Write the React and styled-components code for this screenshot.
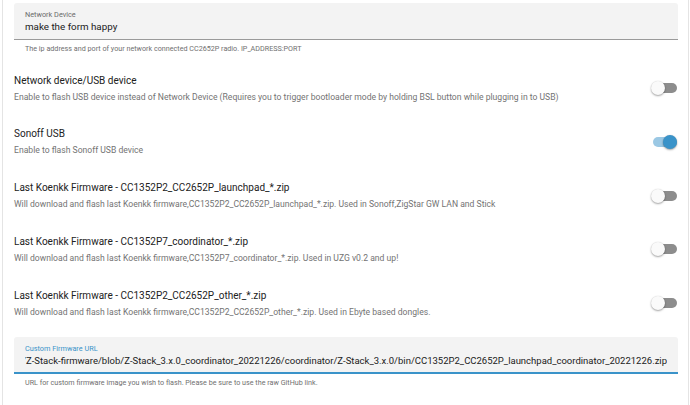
import React, { useState } from 'react';
import styled, { createGlobalStyle } from 'styled-components';

const GlobalStyle = createGlobalStyle`
  html, body {
    margin: 0;
    padding: 0;
    background: #ffffff;
    font-family: Roboto, "Noto Sans", "Liberation Sans", sans-serif;
  }
`;

const Page = styled.div`
  width: 690px;
  height: 405px;
  overflow: hidden;
  padding: 0 1px 0 2px;
  box-sizing: border-box;
`;

const Card = styled.div`
  height: 100%;
  border-left: 1px solid #e4e4e4;
  border-right: 1px solid #e4e4e4;
  padding: 3px 10px 0 11px;
  box-sizing: border-box;
`;

const Field = styled.div`
  display: flex;
  flex-direction: column;
`;

const FieldBox = styled.div`
  background: #f3f3f3;
  border-radius: 3px 3px 0 0;
  height: 37px;
  padding: 7px 11px 0;
  box-sizing: border-box;
  border-bottom: ${p => (p.$focused ? '2px solid #3a93c9' : '1px solid #9a9a9a')};
  display: flex;
  flex-direction: column;
  overflow: hidden;
`;

const FieldLabel = styled.div`
  font-size: 7.3px;
  line-height: 10px;
  color: ${p => (p.$focused ? '#3a93c9' : '#6b6b6b')};
`;

const FieldValue = styled.div`
  font-size: ${p => (p.$end ? '9.5px' : '9.8px')};
  line-height: 13px;
  color: #212121;
  white-space: nowrap;
  display: flex;
  justify-content: ${p => (p.$end ? 'flex-end' : 'flex-start')};
  overflow: hidden;
`;

const Helper = styled.div`
  font-size: 7.2px;
  line-height: 10px;
  color: #6f6f6f;
  padding: 4px 11px 0;
`;

const Rows = styled.div`
  display: flex;
  flex-direction: column;
  padding-top: 18px;
  gap: 21.75px;
  margin-bottom: 18px;
`;

const Row = styled.div`
  display: flex;
  align-items: center;
  justify-content: space-between;
  height: 32px;
`;

const RowText = styled.div`
  display: flex;
  flex-direction: column;
  gap: 3px;
`;

const Title = styled.div`
  font-size: 10px;
  line-height: 14px;
  color: #212121;
`;

const Desc = styled.div`
  font-size: 8.6px;
  line-height: 12px;
  color: #737373;
`;

const SwitchWrap = styled.button`
  position: relative;
  width: 27px;
  height: 14px;
  padding: 0;
  border: none;
  background: transparent;
  cursor: pointer;
  flex-shrink: 0;
`;

const Track = styled.span`
  position: absolute;
  left: 2px;
  right: 1px;
  top: 2px;
  height: 10px;
  border-radius: 5px;
  background: ${p => (p.$on ? '#9bc8e4' : '#8d8d8d')};
`;

const Thumb = styled.span`
  position: absolute;
  top: 0;
  left: ${p => (p.$on ? '12px' : '0')};
  width: 14px;
  height: 14px;
  border-radius: 50%;
  background: ${p => (p.$on ? '#3a93c9' : '#fafafa')};
  box-shadow: 0 1px 2px rgba(0, 0, 0, 0.35), 0 0 1px rgba(0, 0, 0, 0.15);
`;

const Switch = ({ on, onToggle }) => (
  <SwitchWrap onClick={onToggle}>
    <Track $on={on} />
    <Thumb $on={on} />
  </SwitchWrap>
);

const options = [
  {
    title: 'Network device/USB device',
    desc: 'Enable to flash USB device instead of Network Device (Requires you to trigger bootloader mode by holding BSL button while plugging in to USB)',
    on: false,
  },
  { title: 'Sonoff USB', desc: 'Enable to flash Sonoff USB device', on: true },
  {
    title: 'Last Koenkk Firmware - CC1352P2_CC2652P_launchpad_*.zip',
    desc: 'Will download and flash last Koenkk firmware,CC1352P2_CC2652P_launchpad_*.zip. Used in Sonoff,ZigStar GW LAN and Stick',
    on: false,
  },
  {
    title: 'Last Koenkk Firmware - CC1352P7_coordinator_*.zip',
    desc: 'Will download and flash last Koenkk firmware,CC1352P7_coordinator_*.zip. Used in UZG v0.2 and up!',
    on: false,
  },
  {
    title: 'Last Koenkk Firmware - CC1352P2_CC2652P_other_*.zip',
    desc: 'Will download and flash last Koenkk firmware,CC1352P2_CC2652P_other_*.zip. Used in Ebyte based dongles.',
    on: false,
  },
];

const App = () => {
  const [state, setState] = useState(options.map(o => o.on));

  const toggle = i => {
    setState(s => s.map((v, j) => (j === i ? !v : v)));
  };

  return (
    <Page>
      <GlobalStyle />
      <Card>
        <Field>
          <FieldBox>
            <FieldLabel>Network Device</FieldLabel>
            <FieldValue>make the form happy</FieldValue>
          </FieldBox>
          <Helper>The ip address and port of your network connected CC2652P radio. IP_ADDRESS:PORT</Helper>
        </Field>

        <Rows>
          {options.map((o, i) => (
            <Row key={o.title}>
              <RowText>
                <Title>{o.title}</Title>
                <Desc>{o.desc}</Desc>
              </RowText>
              <Switch on={state[i]} onToggle={() => toggle(i)} />
            </Row>
          ))}
        </Rows>

        <Field>
          <FieldBox $focused>
            <FieldLabel $focused>Custom Firmware URL</FieldLabel>
            <FieldValue $end>
              https://github.com/Koenkk/Z-Stack-firmware/blob/Z-Stack_3.x.0_coordinator_20221226/coordinator/Z-Stack_3.x.0/bin/CC1352P2_CC2652P_launchpad_coordinator_20221226.zip
            </FieldValue>
          </FieldBox>
          <Helper>URL for custom firmware image you wish to flash. Please be sure to use the raw GitHub link.</Helper>
        </Field>
      </Card>
    </Page>
  );
};

export default App;
